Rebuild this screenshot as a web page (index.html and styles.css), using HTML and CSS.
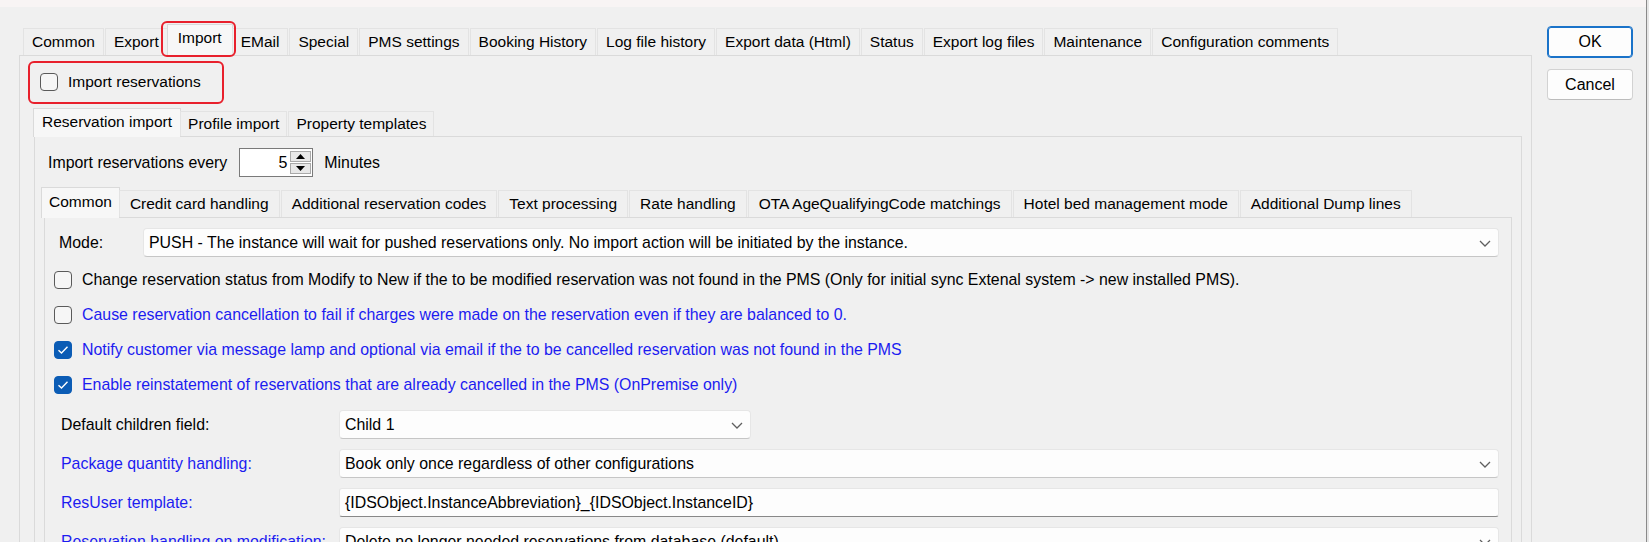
FILE: index.html
```html
<!DOCTYPE html>
<html>
<head>
<meta charset="utf-8">
<link rel="stylesheet" href="styles.css">
</head>
<body>
<div class="strip"></div>
<div class="dialog">
  <div class="main">
    <div class="tabs t1">
      <div class="tab">Common</div>
      <div class="tab">Export</div>
      <div class="tab sel">Import</div>
      <div class="tab">EMail</div>
      <div class="tab">Special</div>
      <div class="tab">PMS settings</div>
      <div class="tab">Booking History</div>
      <div class="tab">Log file history</div>
      <div class="tab">Export data (Html)</div>
      <div class="tab">Status</div>
      <div class="tab">Export log files</div>
      <div class="tab">Maintenance</div>
      <div class="tab">Configuration comments</div>
    </div>
    <div class="panel p1">
      <div class="chk toprow"><span class="box"></span><span>Import reservations</span></div>
      <div class="tabs t2">
        <div class="tab sel">Reservation import</div>
        <div class="tab">Profile import</div>
        <div class="tab">Property templates</div>
      </div>
      <div class="panel p2">
        <div class="every">
          <span>Import reservations every</span>
          <div class="spin">
            <div class="val">5</div>
            <div class="btns">
              <div class="sb"><svg width="9" height="5" viewBox="0 0 9 5"><path d="M0 5 L4.5 0 L9 5 Z" fill="#000"/></svg></div>
              <div class="sb"><svg width="9" height="5" viewBox="0 0 9 5"><path d="M0 0 L4.5 5 L9 0 Z" fill="#000"/></svg></div>
            </div>
          </div>
          <span>Minutes</span>
        </div>
        <div class="tabs t3">
          <div class="tab sel">Common</div>
          <div class="tab">Credit card handling</div>
          <div class="tab">Additional reservation codes</div>
          <div class="tab">Text processing</div>
          <div class="tab">Rate handling</div>
          <div class="tab">OTA AgeQualifyingCode matchings</div>
          <div class="tab">Hotel bed management mode</div>
          <div class="tab">Additional Dump lines</div>
        </div>
        <div class="panel p3">
          <div class="moderow">
            <span class="modelabel">Mode:</span>
            <div class="combo grow">
              <span>PUSH - The instance will wait for pushed reservations only. No import action will be initiated by the instance.</span>
              <svg class="chev" width="12" height="7" viewBox="0 0 12 7"><path d="M1 1 L6 6 L11 1" fill="none" stroke="#5f5f5f" stroke-width="1.3"/></svg>
            </div>
          </div>
          <div class="chk row"><span class="box"></span><span>Change reservation status from Modify to New if the to be modified reservation was not found in the PMS (Only for initial sync Extenal system -&gt; new installed PMS).</span></div>
          <div class="chk row blue"><span class="box"></span><span>Cause reservation cancellation to fail if charges were made on the reservation even if they are balanced to 0.</span></div>
          <div class="chk row blue"><span class="box on"><svg width="12" height="10" viewBox="0 0 12 10"><path d="M1.5 5.2 L4.5 8 L10.5 1.8" fill="none" stroke="#fff" stroke-width="1.4"/></svg></span><span>Notify customer via message lamp and optional via email if the to be cancelled reservation was not found in the PMS</span></div>
          <div class="chk row blue"><span class="box on"><svg width="12" height="10" viewBox="0 0 12 10"><path d="M1.5 5.2 L4.5 8 L10.5 1.8" fill="none" stroke="#fff" stroke-width="1.4"/></svg></span><span>Enable reinstatement of reservations that are already cancelled in the PMS (OnPremise only)</span></div>
          <div class="field first">
            <span class="flabel">Default children field:</span>
            <div class="combo short">
              <span>Child 1</span>
              <svg class="chev" width="12" height="7" viewBox="0 0 12 7"><path d="M1 1 L6 6 L11 1" fill="none" stroke="#5f5f5f" stroke-width="1.3"/></svg>
            </div>
          </div>
          <div class="field">
            <span class="flabel blue">Package quantity handling:</span>
            <div class="combo grow">
              <span>Book only once regardless of other configurations</span>
              <svg class="chev" width="12" height="7" viewBox="0 0 12 7"><path d="M1 1 L6 6 L11 1" fill="none" stroke="#5f5f5f" stroke-width="1.3"/></svg>
            </div>
          </div>
          <div class="field">
            <span class="flabel blue">ResUser template:</span>
            <div class="textbox grow">{IDSObject.InstanceAbbreviation}_{IDSObject.InstanceID}</div>
          </div>
          <div class="field">
            <span class="flabel blue">Reservation handling on modification:</span>
            <div class="combo grow">
              <span>Delete no longer needed reservations from database (default)</span>
              <svg class="chev" width="12" height="7" viewBox="0 0 12 7"><path d="M1 1 L6 6 L11 1" fill="none" stroke="#5f5f5f" stroke-width="1.3"/></svg>
            </div>
          </div>
        </div>
      </div>
    </div>
  </div>
  <div class="btncol">
    <div class="btn ok">OK</div>
    <div class="btn">Cancel</div>
  </div>
</div>
<div class="hl hl-tab"></div>
<div class="hl hl-chk"></div>
<div class="edge"></div>
</body>
</html>
```

FILE: styles.css
```css
* { box-sizing: border-box; }
html, body { margin: 0; height: 542px; overflow: hidden; }
body {
  background: #f0f0f0;
  font-family: "Liberation Sans", Arial, sans-serif;
  font-size: 15.9px;
  color: #000;
  position: relative;
}
.strip { height: 7px; background: #f8f4f4; }
.dialog { display: flex; padding-left: 19px; }
.main { width: 1513px; flex: none; }

.tabs { display: flex; align-items: flex-end; position: relative; z-index: 2; font-size: 15.5px; }
.tab {
  height: 27px;
  padding: 0 8px;
  display: flex;
  align-items: center;
  white-space: nowrap;
  background: #f0f0f0;
  border: 1px solid #e3e3e3;
  border-bottom: none;
  margin-right: 1px;
}
.tab.sel {
  height: 32px;
  margin: 0 -1px -1px -2px;
  padding: 0 10px 5px;
  background: #f7f7f7;
  border-color: #dadada;
}
.t1 { height: 32px; margin-top: 16px; padding-left: 4px; }
.t2 { height: 28px; margin-top: 17px; padding-left: 15px; }
.t2 .tab { height: 25px; padding: 0 7px; }
.t2 .tab.sel { height: 29px; padding: 0 8px 3px; }
.t3 { height: 30px; margin-top: 10px; padding-left: 8px; }
.t3 .tab { height: 27px; padding: 0 10px; }
.t3 .tab.sel { height: 31px; padding: 0 7px 3px; }

.panel { border: 1px solid #dadada; background: #f0f0f0; }
.p1 { height: 500px; }
.p2 { margin: 0 9px 0 14px; height: 420px; }
.p3 { margin: 0 9px 0 9px; height: 340px; padding: 10px 12px 0 0; }

.chk { display: flex; align-items: center; }
.box {
  width: 18px; height: 18px; flex: none;
  border: 1px solid #5a5a5a; border-radius: 4px;
  background: #f6f6f6;
  display: flex; align-items: center; justify-content: center;
}
.box.on { background: #0b5cb5; border-color: #0b5cb5; }
.toprow { margin: 17px 0 0 20px; height: 18px; gap: 10px; font-size: 15.5px; }

.every { display: flex; align-items: center; height: 29px; margin: 11px 0 0 13px; }
.spin {
  width: 74px; height: 29px; margin: 0 11px 0 12px;
  background: #fff; border: 1px solid #7a7a7a;
  display: flex; padding: 2px 1px 2px 0;
}
.spin .val { flex: 1; text-align: right; padding-right: 3px; line-height: 23px; font-size: 16px; }
.spin .btns { width: 21px; display: flex; flex-direction: column; gap: 1px; }
.sb {
  flex: 1; background: #e8e8e8; border: 1px solid #a9a9a9;
  display: flex; align-items: center; justify-content: center;
}

.moderow { display: flex; align-items: center; height: 29px; }
.modelabel { width: 98px; padding-left: 14px; flex: none; }
.combo, .textbox {
  height: 29px;
  background: #fdfdfd;
  border: 1px solid #e6e6e6;
  border-bottom-color: #c6c6c6;
  border-radius: 4px;
  display: flex; align-items: center;
  padding-left: 5px;
  position: relative;
  white-space: nowrap;
}
.grow { flex: 1; }
.textbox { border-bottom: 1px solid #888; border-radius: 3px; }
.chev { position: absolute; right: 7px; top: 11px; }
.combo.short { width: 412px; }

.row { height: 35px; gap: 10px; padding-left: 9px; }
.moderow + .row { margin-top: 5px; }
.blue { color: #1c1cf0; }

.field { display: flex; align-items: center; height: 29px; margin-top: 10px; }
.field.first { margin-top: 8px; }
.flabel { width: 294px; padding-left: 16px; flex: none; }

.btncol { display: flex; flex-direction: column; gap: 11px; padding-top: 19px; margin-left: 15px; }
.btn {
  width: 86px; height: 31px;
  background: #fdfdfd;
  border: 1px solid #d2d2d2; border-bottom-color: #bcbcbc;
  border-radius: 4px;
  display: flex; align-items: center; justify-content: center;
  font-size: 16px;
}
.btn.ok { height: 32px; border: 1px solid #1a73c9; box-shadow: inset 0 0 0 1px #1a73c9; }

.hl { position: absolute; border: 2px solid #e8202c; border-radius: 6px; z-index: 5; }
.hl-tab { left: 161px; top: 21px; width: 75px; height: 36px; }
.hl-chk { left: 28px; top: 61px; width: 196px; height: 43px; }
.edge { position: absolute; top: 0; right: 0; width: 3px; height: 542px; background: #e6e6e6; border-left: 1px solid #8a8a8a; }
```
